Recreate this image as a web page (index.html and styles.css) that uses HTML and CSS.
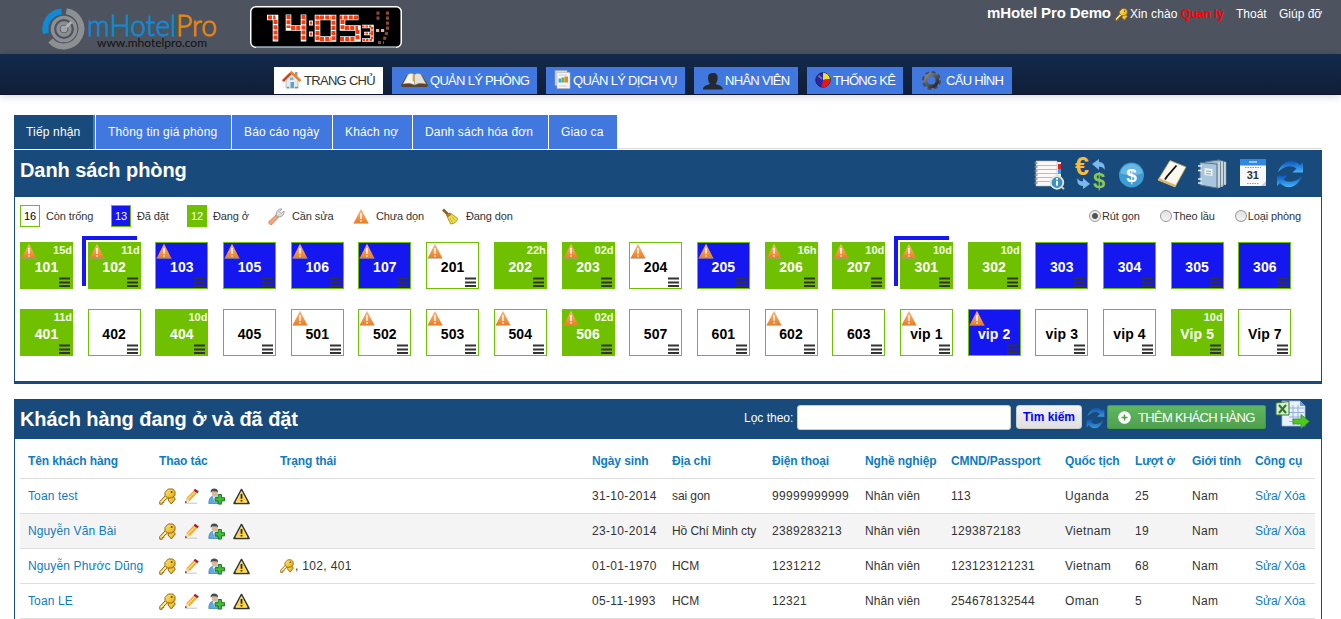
FILE: index.html
```html
<!DOCTYPE html>
<html lang="vi">
<head>
<meta charset="utf-8">
<title>mHotel Pro</title>
<link rel="stylesheet" href="styles.css">
</head>
<body>
<svg class="defs" width="0" height="0">
  <defs>
    <linearGradient id="gOrange" x1="0" y1="0" x2="0" y2="1"><stop offset="0" stop-color="#f9b98a"/><stop offset="1" stop-color="#ef7d1d"/></linearGradient>
    <linearGradient id="gGold" x1="0" y1="0" x2="1" y2="1"><stop offset="0" stop-color="#ffef6a"/><stop offset="1" stop-color="#e0a512"/></linearGradient>
    <linearGradient id="gBlue" x1="0" y1="0" x2="0" y2="1"><stop offset="0" stop-color="#0c55c0"/><stop offset="1" stop-color="#45b4f8"/></linearGradient>
    <linearGradient id="gGray" x1="0" y1="0" x2="1" y2="1"><stop offset="0" stop-color="#8a8a8a"/><stop offset="1" stop-color="#222"/></linearGradient>
  </defs>
  <symbol id="warn" viewBox="0 0 16 16"><path d="M8 .8 15.3 15H.7z" fill="url(#gOrange)"/><path d="M.5 15.3h15" stroke="#a98" stroke-width=".8"/><path d="M8 5v6M8 12.300v1.400" stroke="#fff2e0" stroke-width="1.700"/></symbol>
  <symbol id="menu" viewBox="0 0 11 10"><path d="M0 1.500h11M0 5.500h11M0 9h11" stroke="#333" stroke-width="2"/></symbol>
  <symbol id="key" viewBox="0 0 17 17"><path d="M6.500 7.500.8 13.600v2.600h2.400v-1.600h1.600v-1.500l4-3.400z" fill="#ffe98a" stroke="#8b5b0c"/><path d="M12 5.500l4.300 5.500-4 5L9 12z" fill="url(#gGold)" stroke="#9a6410"/><path d="M6 4.500 9.300 1h4.500L16 3.500v4L12.600 10H8.500L6 7.500z" fill="url(#gGold)" stroke="#9a6410"/><circle cx="12.600" cy="3.900" r="1" fill="#6b430a"/></symbol>
  <symbol id="pencil" viewBox="0 0 16 16"><path d="M1 15.200h12" stroke="#ccc" stroke-width="1.200"/><path d="M1.200 14.600l1.300-4.500L10 2.300l3.100 2.800-7.500 8z" fill="#f6a62b"/><path d="M3.800 11.200 11.300 3.600" stroke="#ffdc83" stroke-width="1.300"/><path d="M1 15l1.400-5 3.400 3.200z" fill="#f8dcb6"/><path d="M1 15l.6-2 1.500 1.300z" fill="#222"/><path d="M9.600 2.400 11 .8l3.800 2.800-1.600 1.700z" fill="#b5162a"/></symbol>
  <symbol id="user" viewBox="0 0 17 17"><path d="M.8 15.500c0-5 1.800-7.200 5-7.200s5.300 2 5.500 7.200z" fill="#5da9e6" stroke="#3b7db8" stroke-width=".7"/><path d="M4.800 8.300 6.500 14l1.700-5.700z" fill="#fff"/><ellipse cx="6.700" cy="4.900" rx="3" ry="3.600" fill="#d9b99a"/><path d="M2.600 4.600C2.300 1.700 4 .6 6 .6c2.600 0 4.400 1.400 4 4.200L8.800 3.400 4.500 3.300z" fill="#444f55"/><path d="M10.200 6.500h3.200v3.200h3.200v3.200h-3.200v3.200h-3.200v-3.200H7V9.700h3.200z" fill="#3fbf35" stroke="#116e17" stroke-width=".9"/></symbol>
  <symbol id="alert" viewBox="0 0 17 17"><path d="M8.500 1.500 16 15.500H1z" fill="#ffd23b" stroke="#38352d" stroke-width="1.600" stroke-linejoin="round"/><path d="M8.500 3.400 14 14H3z" fill="none" stroke="#fff0a8" stroke-width=".7"/><path d="M8.500 6v4.700M8.500 12v1.600" stroke="#222" stroke-width="1.700"/></symbol>
  <symbol id="sync" viewBox="0 0 28 28"><path d="M2 12C5 4 11 0 17 1c3 .5 5 2 7 4l3-3v10.500H16.500L20.500 8.500C15 4.500 8 6 2 12z" fill="url(#gBlue)"/><path d="M26 16c-3 8-9 12-15 11-3-.5-5-2-7-4l-3 3V15.500h10.500L7.500 19.500c5.500 4 12.500 2.500 18.500-3.500z" fill="url(#gBlue)"/></symbol>
</svg>

<header class="top">
  <svg class="logo" width="180" height="46" viewBox="0 0 180 46">
    <g fill="none">
      <path d="M3.900 29.500A17.700 17.700 0 0 1 19.700 7.400" stroke="#1289d2" stroke-width="6"/>
      <path d="M24.300 7.200A17.700 17.700 0 1 1 8.500 36.500" stroke="#8d9093" stroke-width="6"/>
      <circle cx="22" cy="25" r="11.600" stroke="#8d9093" stroke-width="3.400"/>
      <circle cx="22" cy="25" r="6" stroke="#8d9093" stroke-width="3.400"/>
      <path d="M22 25l7.500-7" stroke="#b0b2b4" stroke-width="2.600"/>
    </g>
    <circle cx="22" cy="25" r="3.400" fill="#a3a5a8"/>
    <text x="45" y="32" class="logo-name" textLength="130" lengthAdjust="spacingAndGlyphs"><tspan fill="#1289d2">mHotel</tspan><tspan fill="#e58512">Pro</tspan></text>
    <text x="55" y="42.800" class="logo-url" textLength="110" lengthAdjust="spacingAndGlyphs">www.mhotelpro.com</text>
  </svg>
  <svg class="clock" width="152" height="42" viewBox="0 0 152 42" role="img" aria-label="14:05:37">
    <rect x=".75" y=".75" width="150.500" height="40.500" rx="5" fill="#000" stroke="#fff" stroke-width="1.500"/>
    <path d="M6 41.300h140" stroke="#3c9ac0"/>
    <g fill="none" stroke="#fff" stroke-width="5.600">
      <path d="M17 11.500h8.500v24M38.500 8.500v13.500h13M53.500 8.500v27M67.500 11.500h16v21.500h-16zM108.500 11.500h-16v10.500h15.500v11h-18"/>
      <path d="M61 14.500v5M61 25.500v5" stroke-width="4"/>
      <path d="M112 20.500h10v7h-8M122 27v7h-10" stroke-width="3.500"/>
    </g>
    <g fill="none" stroke="#fa3a0b" stroke-width="4" stroke-dasharray="4 1.200">
      <path d="M18 11.500h7.500M25.500 14v21M38.500 9v13M41 22h10M53.500 9v26M67.500 9.500v25M70 33h11M70 11.500h11M83.500 9.500v25M108 11.500h-18M92.500 14v9M95 22h13M107.500 24v10M90 33h15"/>
      <path d="M61 15.500v3M61 26.500v3" stroke-width="2.500"/>
      <path d="M112 20.500h10v7h-8M122 27v7h-10" stroke-width="2.200" stroke-dasharray="2.500 1"/>
    </g>
    <g fill="none" stroke-width="3" stroke-dasharray="3.200 1.800">
      <path d="M128 5.500v9M137.500 5.500v20M137 26l-3 8M128 36.500h6" stroke="#8b4a3a"/><path d="M126 24.500h10" stroke="#e8b5a6" stroke-width="3"/>
    </g>
  </svg>
  <div class="account">
    <strong class="hotel">mHotel Pro Demo</strong>
    <svg class="key-s" width="13" height="13"><use href="#key"/></svg>
    <span class="hello">Xin chào</span>
    <b class="role">Quản lý</b>
    <a class="out">Thoát</a>
    <a class="help">Giúp đỡ</a>
  </div>
</header>

<nav class="nav">
  <a class="item on w1"><svg width="20" height="18" viewBox="0 0 20 18"><path d="M4 8l6-5 6 5v9H4z" fill="#e3ecf2" stroke="#9fb0ba" stroke-width=".7"/><path d="M13 1h2.500v4H13z" fill="#8aa0aa"/><path d="M1 10 9.500 1.500 18.500 10" fill="none" stroke="#ee8326" stroke-width="2.600"/><path d="M1 10 8.500 2.500" stroke="#cf4524" stroke-width="2.400"/><path d="M8.500 11h3.500v6H8.500z" fill="#6c9fc7"/><path d="M8 6.500h3.500v2.500H8z" fill="#7fb4dd"/><path d="M5 16.500h2M13 16.500h3" stroke="#79a05c" stroke-width="1.500"/></svg>TRANG CHỦ</a>
  <a class="item w2"><svg width="27" height="16" viewBox="0 0 27 16"><path d="M0 13 6 3h15l6 10-1 2H1z" fill="#5d452d"/><path d="M2 12 7 2.500C9 1 12 1 13.500 3v10C10 11 6 11 2 12z" fill="#f7f5ee" stroke="#999" stroke-width=".5"/><path d="M25 12 20 2.500C18 1 15 1 13.500 3v10c3.500-2 7.500-2 11.500-1z" fill="#e4e0d6" stroke="#999" stroke-width=".5"/><path d="M12.500 2.500v7" stroke="#e3a72c" stroke-width="1.800"/></svg>QUẢN LÝ PHÒNG</a>
  <a class="item w3"><svg width="17" height="19" viewBox="0 0 17 19"><path d="M1 .5h12v15H1z" fill="#d7d9db" stroke="#aaa" stroke-width=".6"/><path d="M3 2.500h13v16H3z" fill="#f4f5f6" stroke="#b5b5b5" stroke-width=".6"/><path d="M5 5h8M5 16h8" stroke="#ccc"/><path d="M4.500 8.500h3v4h-3z" fill="#46a6d9"/><path d="M7.500 7.500h3v5h-3z" fill="#72b74a"/><path d="M10.500 6.500h3.500v6h-3.500z" fill="#e58a34"/></svg>QUẢN LÝ DỊCH VỤ</a>
  <a class="item w4"><svg width="20" height="18" viewBox="0 0 20 18"><path d="M0 17.500c0-4 4-4 7-5.500-2-2.500-2.500-6-1.500-9C6.500.5 13 0 14.200 3c1 3 .3 6.500-1.500 9 3 1.500 7 1.500 7.300 5.500z" fill="#262a30"/></svg>NHÂN VIÊN</a>
  <a class="item w5"><svg width="16" height="16" viewBox="0 0 16 16"><circle cx="8" cy="8" r="7.200" fill="#2c24a4" stroke="#281b52"/><path d="M8 8V.8a7.200 7.200 0 0 1 7 6z" fill="#f2df21"/><path d="M8 8l7.100-1.200A7.200 7.200 0 0 1 6.500 15z" fill="#e3161c"/><path d="M7 7 3.500 3.500" stroke="#6967ca" stroke-width="2"/></svg>THỐNG KÊ</a>
  <a class="item w6"><svg width="21" height="19" viewBox="0 0 21 19"><circle cx="10.500" cy="9.500" r="7.800" fill="none" stroke="#4a4a4a" stroke-width="3.400" stroke-dasharray="3.600 2.526"/><circle cx="10.500" cy="9.500" r="5.900" fill="none" stroke="url(#gGray)" stroke-width="3.600"/></svg>CẤU HÌNH</a>
</nav>

<main class="page">
  <div class="tabs"><a class="tab on t1">Tiếp nhận</a><a class="tab t2">Thông tin giá phòng</a><a class="tab t3">Báo cáo ngày</a><a class="tab t4">Khách nợ</a><a class="tab t5">Danh sách hóa đơn</a><a class="tab t6">Giao ca</a></div>

  <section class="panel rooms-panel">
    <div class="head tall">
      <h2>Danh sách phòng</h2>
      <div class="tools">
        <svg width="32" height="32" viewBox="0 0 32 32"><path d="M23 4h4v24h-4z" fill="#eee"/><path d="M24 6h3v5h-3z" fill="#d8232a"/><path d="M24 11h3v5h-3z" fill="#39a1e0"/><path d="M2 3h21v25H2z" fill="#fbf8f7" stroke="#bbb" stroke-width=".6"/><path d="M2 7.500h21M2 11.500h21M2 15.500h21M2 19.500h21M2 23.500h21" stroke="#e9a7a5"/><path d="M.5 5h3M.5 9h3M.5 13h3M.5 17h3M.5 21h3M.5 25h3" stroke="#888" stroke-width="1.300"/><circle cx="23" cy="24.500" r="6.300" fill="#3e8fc2" stroke="#dfe7df" stroke-width="1.800"/><path d="M23 22.800v5M23 20v1.700" stroke="#fff" stroke-width="1.800"/><path d="M27.500 29l2.500 2" stroke="#ccc" stroke-width="2"/></svg>
        <svg width="32" height="32" viewBox="0 0 32 32"><text x="0" y="17" class="cur euro">€</text><text x="18" y="30" class="cur usd">$</text><path d="M17 6l7-5v3c4 0 6.500 3 5.500 8-1-2.500-3-3.500-5.500-3.300V12z" fill="#7cb8ee"/><path d="M15 26l-7 5v-3c-4 0-6.500-3-5.500-8 1 2.500 3 3.500 5.500 3.300V20z" fill="#7cb8ee"/></svg>
        <svg width="32" height="32" viewBox="0 0 32 32"><circle cx="16.500" cy="17" r="12.500" fill="#3b9dd4"/><path d="M5 15a11.800 11.800 0 0 1 23 0c-7 3-16 3-23 0z" fill="#67b8e3"/><text x="11.300" y="24" class="cur coin">$</text></svg>
        <svg width="32" height="32" viewBox="0 0 32 32"><path d="M14 2.500 30 9 19 29 2 22z" fill="#faf7ee" stroke="#c9a55a" stroke-width=".8"/><path d="M2 22l17 7 1-2L3 20z" fill="#d8b66d"/><path d="M20.500 7.500 11 18.500l-2 3" stroke="#111" stroke-width="1.900" fill="none"/></svg>
        <svg width="32" height="32" viewBox="0 0 32 32"><path d="M8 4l14-2 7 2v22l-8 4-9-2z" fill="#a7bccb" stroke="#62798a"/><path d="M28 4v23M25 3.500V29M22 4v26" stroke="#eef4f8"/><path d="M26.500 4v24M23.500 4v25" stroke="#6d8495"/><path d="M3 4.500l17 1.500V30L3 27z" fill="#a9c6dc" stroke="#55728a"/><path d="M7.500 10l8 1v7l-8-1z" fill="#edf4f8"/><path d="M9 13l5 .5M9 15.500l5 .5" stroke="#8aa"/><path d="M1 8h4M1 12.500h4M1 21h4M1 25h4" stroke="#e8eef2" stroke-width="1.500"/></svg>
        <svg width="32" height="32" viewBox="0 0 32 32"><path d="M3 1h26v27H3z" fill="#f7f9fb"/><path d="M3 1h26v6.500H3z" fill="#3188e0"/><path d="M12 4h8" stroke="#b9dcff" stroke-width="1.500"/><path d="M8 9.500h16M10 25.500h12" stroke="#999" stroke-dasharray="1.500 1"/><path d="M24 28l5-5v5z" fill="#ccc"/><text x="9.700" y="20.500" class="cal">31</text></svg>
        <svg width="28" height="28" viewBox="0 0 28 28"><use href="#sync"/></svg>
      </div>
    </div>
    <div class="legend">
      <span class="box">16</span><span class="lg l1">Còn trống</span>
      <span class="box blue">13</span><span class="lg l2">Đã đặt</span>
      <span class="box green">12</span><span class="lg l3">Đang ở</span>
      <svg class="wrench" width="17" height="17" viewBox="0 0 17 17"><path d="M.8 13.500 8.500 6.500l2.500 2.300L4 16.500H2L.7 15z" fill="#f0a57c" stroke="#cf7f5b" stroke-width=".7"/><path d="M8 7.300C8 3 10.500.5 14 1l-2.500 2.700 1.700 1.700L16 3c.6 3.500-2 6-5.300 6z" fill="#dcdcdc" stroke="#8f8f8f" stroke-width=".8"/></svg><span class="lg l4">Cần sửa</span>
      <svg width="16" height="16"><use href="#warn"/></svg><span class="lg l5">Chưa dọn</span>
      <svg width="17" height="17" viewBox="0 0 17 17"><path d="M1 1.500 6 6.500" stroke="#8a6124" stroke-width="2.800"/><path d="M4 7.500 7.500 4.500 10 6l-4 4z" fill="#b67527"/><path d="M5.500 9.500 9.700 6l6 4.500c-.5 3-3.500 5.500-7 5.500z" fill="#f0df48" stroke="#a3901e" stroke-width=".9"/><path d="M8 10l2.500 4.500M10 8.500l3 4" stroke="#b3a028" stroke-width=".8"/></svg><span class="lg l6">Đang dọn</span>
      <div class="radios"><label class="ra"><i class="rd sel"></i>Rút gọn</label><label class="rb"><i class="rd"></i>Theo lầu</label><label class="rc"><i class="rd"></i>Loại phòng</label></div>
    </div>
    <div class="rooms" id="rooms"></div>
  </section>

  <section class="panel guests">
    <div class="head short">
      <h2>Khách hàng đang ở và đã đặt</h2>
      <div class="filter">
        <label>Lọc theo:</label><input class="q" type="text"><button class="find">Tìm kiếm</button>
        <svg class="re" width="19" height="22" viewBox="0 0 28 28" preserveAspectRatio="none"><use href="#sync" width="28" height="28"/></svg>
        <button class="add"><svg width="13" height="13" viewBox="0 0 13 13"><circle cx="6.500" cy="6.500" r="6.300" fill="#fff"/><path d="M3.500 6.500h6M6.500 3.500v6" stroke="#4a9b4a" stroke-width="1.500"/></svg>THÊM KHÁCH HÀNG</button>
        <svg class="xls" width="34" height="30" viewBox="0 0 34 30"><path d="M6 1h18l5 5v20H6z" fill="#e9f1fb" stroke="#9fb9dd" stroke-width=".8"/><path d="M13 8h15M13 12.500h15M13 17h15M13 21.500h15M17 5v20M22 5v20" stroke="#8fb0e0"/><path d="M24 1v5h5z" fill="#6c9ad6"/><path d="M0 3l13-1.500v13.500H0z" fill="#dbe9d6" stroke="#397a35"/><path d="M3 5l7 8M10 5l-7 8" stroke="#2c7d2a" stroke-width="2.200"/><path d="M17 19h8v-4.500l8.500 7L25 28.500V24h-8z" fill="#4fcb1c" stroke="#2b8a12" stroke-width=".7"/></svg>
      </div>
    </div>
    <table class="grid">
      <colgroup><col class="c1"><col class="c2"><col class="c3"><col class="c4"><col class="c5"><col class="c6"><col class="c7"><col class="c8"><col class="c9"><col class="c10"><col class="c11"><col class="c12"></colgroup>
      <thead><tr><th>Tên khách hàng</th><th>Thao tác</th><th>Trạng thái</th><th>Ngày sinh</th><th>Địa chỉ</th><th>Điện thoại</th><th>Nghề nghiệp</th><th>CMND/Passport</th><th>Quốc tịch</th><th>Lượt ở</th><th>Giới tính</th><th>Công cụ</th></tr></thead>
      <tbody id="guests"></tbody>
    </table>
  </section>
</main>
<script src="app.js"></script>
</body>
</html>
```
FILE: app.js
```js
// name | state (g = occupied, b = booked, w = free) | dirty | stay | next booking
const rooms = `101 g ! 15d;102 g ! 11d +;103 b !;105 b !;106 b !;107 b !;201 w !;202 g - 22h;203 g ! 02d;204 w !;205 b !;206 g ! 16h;207 g ! 10d;301 g ! 10d +;302 g - 10d;303 b -;304 b -;305 b -;306 b -;401 g - 11d;402 w -;404 g - 10d;405 w -;501 w !;502 w !;503 w !;504 w !;506 g ! 02d;507 w -;601 w -;602 w !;603 w -;vip_1 w !;vip_2 b !;vip_3 w -;vip_4 w -;Vip_5 g - 10d;Vip_7 w -`;

document.getElementById('rooms').innerHTML = rooms.split(';').map(row => {
  const [name, state, dirty, stay, next] = row.split(' ');
  return `<div class="cell"><div class="room ${state}${next ? ' next' : ''}">` +
    (dirty === '!' ? '<svg class="dirty" width="16" height="16"><use href="#warn"/></svg>' : '') +
    (stay ? `<span class="stay">${stay}</span>` : '') +
    `<span class="name">${name.replace('_', ' ')}</span>` +
    '<svg class="more" width="11" height="10"><use href="#menu"/></svg></div></div>';
}).join('');

const guests = [
  ['Toan test', '', '31-10-2014', 'sai gon', '99999999999', '113', 'Uganda', '25'],
  ['Nguyễn Văn Bài', '', '23-10-2014', 'Hồ Chí Minh cty', '2389283213', '1293872183', 'Vietnam', '19'],
  ['Nguyễn Phước Dũng', ', 102, 401', '01-01-1970', 'HCM', '1231212', '123123121231', 'Vietnam', '68'],
  ['Toan LE', '', '05-11-1993', 'HCM', '12321', '254678132544', 'Oman', '5']
];
const icon = (id, size = 17) => `<svg width="${size}" height="${size}"><use href="#${id}"/></svg>`;

document.getElementById('guests').innerHTML = guests.map(([name, status, born, addr, tel, pass, land, stays]) =>
  `<tr><td><a>${name}</a></td><td><div class="acts">${icon('key')}${icon('pencil', 16)}${icon('user')}${icon('alert')}</div></td>` +
  `<td class="num"><div class="status">${status ? icon('key', 14) + status : ''}</div></td><td class="num">${born}</td><td class="tight">${addr}</td>` +
  `<td class="num">${tel}</td><td>Nhân viên</td><td class="num">${pass}</td><td class="num">${land}</td><td class="num">${stays}</td>` +
  '<td class="num">Nam</td><td class="tight"><a>Sửa/ Xóa</a></td></tr>').join('');
```
FILE: styles.css
```css
* { box-sizing: border-box; }
body { margin: 0; height: 619px; overflow: hidden; background: #fff; color: #333; font: 12px "Liberation Sans", Arial, sans-serif; }
.defs { position: absolute; }
svg { display: block; flex: none; overflow: visible; }
a { color: #0e7cc1; text-decoration: none; }

.top { display: flex; height: 54px; background: #4d535f; padding-left: 42px; }
.logo { margin-top: 4px; }
.logo-name { font: 300 29px Lato, sans-serif; stroke-width: .9; }
.logo-name tspan:first-child { stroke: #1289d2; }
.logo-name tspan:last-child { stroke: #e58512; }
.logo-url { font: 400 12px Lato, sans-serif; fill: #111; }
.clock { margin: 6px 0 0 28px; }
.account { display: flex; margin: 5px 18px 0 auto; height: 18px; align-items: center; white-space: nowrap; color: #fff; }
.account a { color: #fff; }
.hotel { width: 124px; font-size: 15px; letter-spacing: -.13px; margin-top: -3px; }
.key-s { margin: 0 2px 0 4px; }
.hello { width: 51px; letter-spacing: .1px; }
.role { width: 55px; color: #f00; font-size: 12px; letter-spacing: -.2px; }
.out { width: 43px; }
.help { width: 44px; }

.nav { display: flex; gap: 9px; height: 41px; padding: 13px 0 0 274px; background: linear-gradient(#132a4c, #101e38); border-bottom: 1px solid #0a142a; box-shadow: 0 1px 8px rgba(0,0,0,.18); }
.item { display: flex; align-items: center; height: 27px; padding-left: 8px; background: #4078df; color: #fff; font-size: 13px; letter-spacing: -.7px; white-space: nowrap; }
.item svg { margin-right: 2px; margin-top: -2px; }
.item.on { background: #fff; color: #333; }
.w1 { width: 109px; } .w2 { width: 145px; padding-left: 9px; } .w3 { width: 139px; } .w4 { width: 104px; padding-left: 9px; } .w5 { width: 96px; } .w6 { width: 100px; padding-left: 9px; }
.w2 svg { margin-top: -2px; }
.w4 svg { margin: 1px 2px 0 0; } .w6 svg { margin: 0 4px 0 0; }

.page { padding: 20px 19px 0 14px; }
.tabs { display: flex; height: 34px; box-shadow: inset 0 -1px #ddd; margin-bottom: 1px; }
.tab { height: 34px; line-height: 34px; padding-left: 12px; background: #4078df; color: #fff; border-right: 1px solid #fff; letter-spacing: .17px; white-space: nowrap; }
.tab.on { background: linear-gradient(#194a7c, #194a7c) 0 0 / 79px 100% no-repeat #4078df; }
.t1 { width: 82px; } .t2 { width: 136px; } .t3 { width: 101px; } .t4 { width: 80px; } .t5 { width: 136px; } .t6 { width: 68px; border: 0; }

.panel { border: 1px solid #194a7c; border-top: 0; }
.head { display: flex; justify-content: space-between; background: #194a7c; color: #fff; }
h2 { margin: 0 0 0 5px; font-size: 20px; line-height: 40px; letter-spacing: -.07px; white-space: nowrap; }
.tall { height: 47px; }
.tools { display: flex; gap: 8.700px; padding: 8px 17px 0 0; }
.tools svg:last-child { margin: 2px 0 0 -2px; }
.cur { font-family: "Liberation Sans", sans-serif; font-weight: 700; }
.euro { font-size: 25px; fill: #f4bd3c; }
.usd { font-size: 22px; fill: #8bc850; }
.coin { font-size: 19px; fill: #fff; }
.cal { font: 700 11px "Liberation Sans", sans-serif; fill: #333; }

.rooms-panel { height: 234px; border-bottom-width: 3px; }
.legend { display: flex; align-items: center; height: 22px; margin: 8px 0 0 5px; font-size: 11px; letter-spacing: -.12px; white-space: nowrap; }
.box { width: 20px; height: 22px; border: 1px solid #6fc100; color: #000; line-height: 20px; text-align: center; letter-spacing: 0; margin-right: 6px; }
.blue { background: #1517f0; color: #fff; }
.green { background: #6fc100; color: #fff; }
.l1 { width: 65px; } .l2 { width: 50px; } .l3 { width: 55px; } .l4 { width: 61px; margin-left: 7px; } .l5 { width: 66px; margin-left: 7px; } .l6 { margin-left: 7px; }
.radios { display: flex; margin: 0 20px 0 auto; }
.radios label { display: flex; align-items: center; }
.ra { width: 71px; } .rb { width: 75px; } .rc { width: 66px; }
.rd { width: 12px; height: 12px; border: 1px solid #9a9a9a; border-radius: 50%; background: linear-gradient(#e2e2e2, #f4f4f4); margin-right: 1px; }
.sel { background: radial-gradient(circle, #555 0 2.600px, #eee 3.400px); }

.rooms { display: grid; grid-template-columns: repeat(19, 67.690px); grid-auto-rows: 67px; margin: 15px 0 0 5px; }
.room { position: relative; width: 53px; height: 47px; border: 1px solid #6fc100; text-align: center; font-weight: 700; }
.room.w { color: #000; }
.room.g { background: #6fc100; color: #fff; }
.room.b { background: #1517f0; color: #fff; }
.next::before { content: ""; position: absolute; left: -7px; top: -7px; width: 51px; height: 46px; border: solid #1517f0; border-width: 4px 0 0 4px; }
.name { display: block; font-size: 14px; line-height: 16px; padding-top: 16px; letter-spacing: .1px; }
.dirty { position: absolute; left: 0; top: 0; }
.stay { position: absolute; right: 0; top: 1px; font-size: 11px; line-height: 13px; color: #f3fbe6; }
.more { position: absolute; right: 2px; bottom: 1px; }

.guests { margin-top: 15px; height: 240px; }
.short { height: 40px; }
.filter { display: flex; align-items: flex-start; padding: 6px 11px 0 0; }
.filter label { width: 53px; line-height: 27px; white-space: nowrap; }
.q { width: 214px; height: 25px; border: 1px solid #ccc; border-radius: 3px; background: #fff; padding: 0; }
.find { width: 66px; height: 24px; margin-left: 5px; padding: 0; border: 1px solid #ccc; border-radius: 3px; background: linear-gradient(#f4f4f4, #dfdfdf); color: #00f; font: 700 12px "Liberation Sans", sans-serif; white-space: nowrap; }
.re { margin: 2px 2px 0 4px; opacity: .75; }
.add { display: flex; align-items: center; gap: 7px; width: 159px; height: 24px; padding: 0 0 0 10px; border: 1px solid #459a45; border-radius: 2px; background: linear-gradient(#5fb85f, #4fa04f); color: #fff; font: 13px "Liberation Sans", sans-serif; letter-spacing: -.7px; white-space: nowrap; }
.xls { margin: -5px 0 0 10px; }

.grid { width: 1295px; margin: 0 0 0 5px; table-layout: fixed; border-collapse: separate; border-spacing: 0; }
.grid th, .grid td { height: 35px; padding: 0 0 0 8px; border-bottom: 1px solid #ddd; text-align: left; vertical-align: middle; white-space: nowrap; letter-spacing: .12px; }
.grid th { height: 40px; padding-top: 5px; color: #0e7cc1; letter-spacing: -.1px; }
.grid .num { letter-spacing: .33px; }
.grid .tight { letter-spacing: -.08px; }
.grid tbody tr:nth-child(2) { background: #f4f4f4; }
.c1 { width: 131px; } .c2 { width: 121px; } .c3 { width: 312px; } .c4 { width: 80px; } .c5 { width: 100px; } .c6 { width: 93px; } .c7 { width: 86px; } .c8 { width: 114px; } .c9 { width: 70px; } .c10 { width: 57px; } .c11 { width: 63px; } .c12 { width: 68px; }
.acts { display: flex; gap: 8px; padding-top: 1px; }
.status { display: flex; align-items: center; gap: 1px; }
```
